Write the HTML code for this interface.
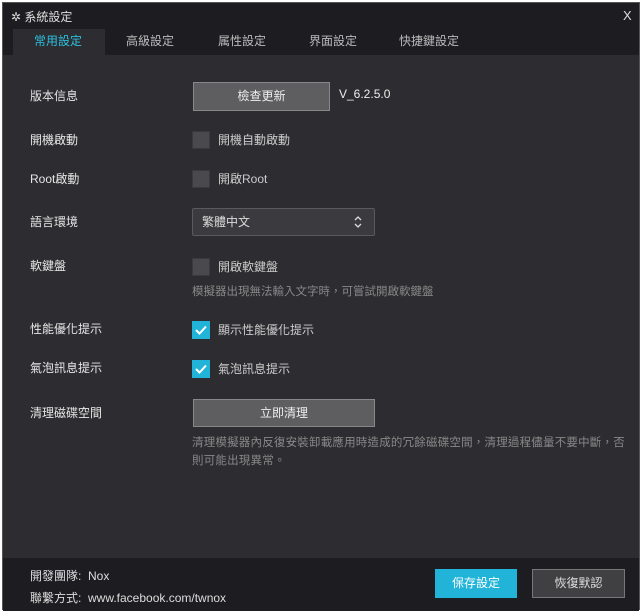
<!DOCTYPE html>
<html><head><meta charset="utf-8"><style>
*{margin:0;padding:0;box-sizing:border-box}
body{width:644px;height:615px;background:#fff;font-family:"Liberation Sans","Noto Sans CJK TC",sans-serif;color:#ddd;font-size:12px;position:relative;overflow:hidden}
.win{position:absolute;left:2px;top:2px;width:638px;height:608px;background:#2d2c30;border:1px solid #555}
.title{position:absolute;left:0;top:0;width:100%;height:52px;background:#1d1c20}
.abs{position:absolute;white-space:nowrap}
.tab{position:absolute;top:25px;height:26px;line-height:26px;font-size:12px;color:#bbb}
.lbl{position:absolute;left:27px;font-size:12px;color:#e6e6e6}
.cb{position:absolute;left:189px;width:18px;height:18px;background:#4a494d;border:1px solid #3a393d}
.cb.on{background:#22b4d8;border-color:#22b4d8}
.cbt{position:absolute;left:215px;font-size:12px;color:#ccc}
.btn{position:absolute;background:#5e5e60;border:1px solid #888;color:#eee;text-align:center;font-size:12px}
.foot{position:absolute;left:0;top:555px;width:100%;height:53px;background:#1d1c20}
.hint{position:absolute;left:189px;font-size:11.5px;color:#888;line-height:18px}
</style></head><body>
<div class="win">
<div class="title">
<div class="abs" style="left:8px;top:5px;font-size:12px;color:#ddd">✲ 系統設定</div>
<div class="abs" style="left:620px;top:5px;font-size:13px;color:#ddd">X</div>
<div style="position:absolute;left:10px;top:26px;width:92px;height:26px;background:#2d2c30"></div>
<div class="tab" style="left:31px;color:#2cc0e0">常用設定</div>
<div class="tab" style="left:123px">高級設定</div>
<div class="tab" style="left:215px">属性設定</div>
<div class="tab" style="left:306px">界面設定</div>
<div class="tab" style="left:396px">快捷鍵設定</div>
</div>
<div class="lbl" style="top:84px">版本信息</div>
<div class="btn" style="left:190px;top:79px;width:137px;height:29px;line-height:27px">檢查更新</div>
<div class="abs" style="left:336px;top:84px;font-size:12px;color:#eee">V_6.2.5.0</div>
<div class="lbl" style="top:128px">開機啟動</div>
<div class="cb" style="top:128px"></div><div class="cbt" style="top:128px">開機自動啟動</div>
<div class="lbl" style="top:167px">Root啟動</div>
<div class="cb" style="top:167px"></div><div class="cbt" style="top:167px">開啟Root</div>
<div class="lbl" style="top:210px">語言環境</div>
<div style="position:absolute;left:189px;top:205px;width:183px;height:28px;background:#3b3a3e;border:1px solid #5a595d;border-radius:2px"></div>
<div class="abs" style="left:199px;top:210px;color:#ddd">繁體中文</div>
<svg style="position:absolute;left:350px;top:211px" width="10" height="16" viewBox="0 0 10 16"><path d="M2 6l3-3 3 3M2 10l3 3 3-3" stroke="#ddd" stroke-width="1.3" fill="none"/></svg>
<div class="lbl" style="top:254px">軟鍵盤</div>
<div class="cb" style="top:255px"></div><div class="cbt" style="top:255px">開啟軟鍵盤</div>
<div class="hint" style="top:280px">模擬器出現無法輸入文字時，可嘗試開啟軟鍵盤</div>
<div class="lbl" style="top:317px">性能優化提示</div>
<div class="cb on" style="top:318px"><svg width="16" height="16" viewBox="0 0 16 16"><path d="M3 8l3.5 3.5L13 4.5" stroke="#fff" stroke-width="2" fill="none"/></svg></div><div class="cbt" style="top:318px">顯示性能優化提示</div>
<div class="lbl" style="top:356px">氣泡訊息提示</div>
<div class="cb on" style="top:357px"><svg width="16" height="16" viewBox="0 0 16 16"><path d="M3 8l3.5 3.5L13 4.5" stroke="#fff" stroke-width="2" fill="none"/></svg></div><div class="cbt" style="top:357px">氣泡訊息提示</div>
<div class="lbl" style="top:401px">清理磁碟空間</div>
<div class="btn" style="left:190px;top:396px;width:182px;height:28px;line-height:26px">立即清理</div>
<div class="hint" style="top:431px;width:440px;white-space:normal;letter-spacing:0.2px">清理模擬器內反復安裝卸載應用時造成的冗餘磁碟空間，清理過程儘量不要中斷，否則可能出現異常。</div>
<div class="foot">
<div class="abs" style="left:27px;top:9px;color:#ddd">開發團隊:&nbsp;&nbsp;Nox</div>
<div class="abs" style="left:27px;top:31px;color:#ddd">聯繫方式:&nbsp;&nbsp;www.facebook.com/twnox</div>
<div class="abs" style="left:432px;top:11px;width:82px;height:29px;background:#22b4d8;line-height:29px;text-align:center;color:#fff">保存設定</div>
<div class="abs" style="left:529px;top:11px;width:93px;height:29px;background:#404043;border:1px solid #777;line-height:27px;text-align:center;color:#ddd">恢復默認</div>
</div>
</div>
</body></html>
